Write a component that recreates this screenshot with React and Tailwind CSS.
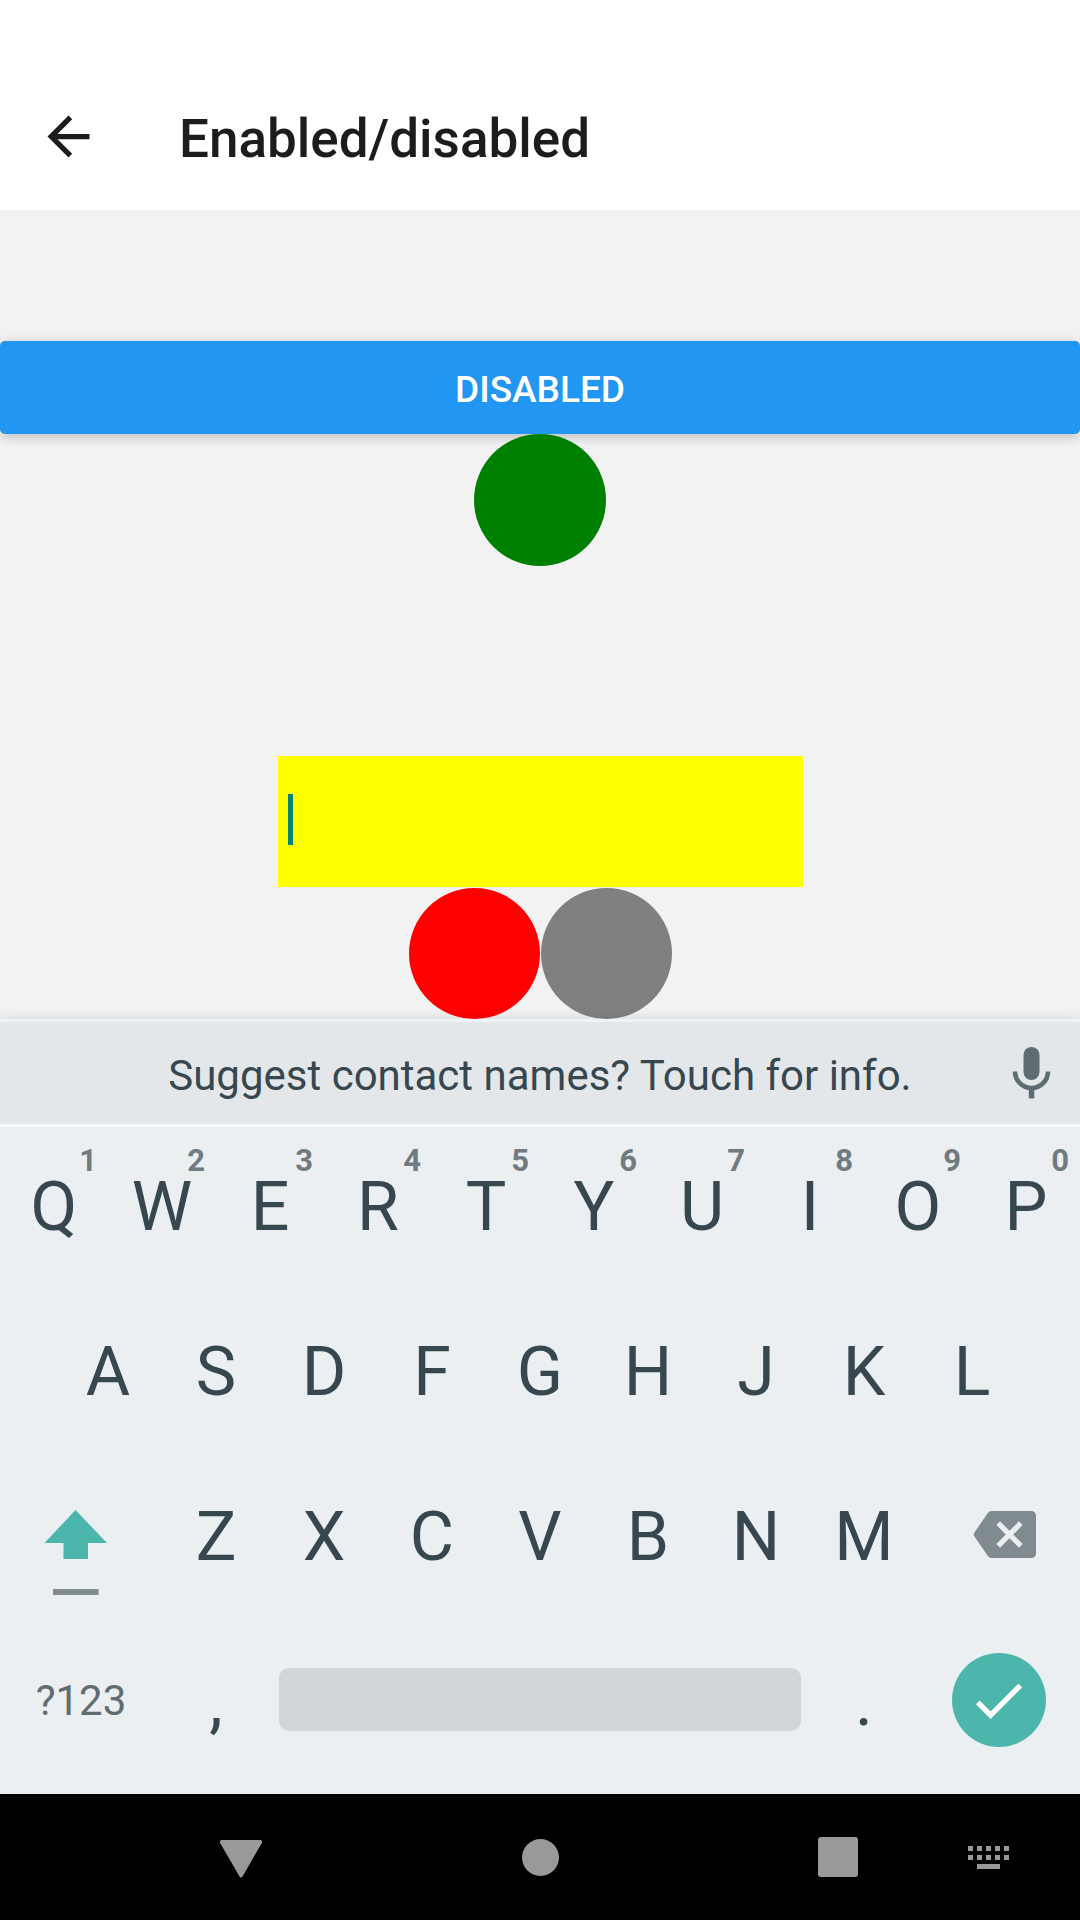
const topRow = [
  ["Q", "1"],
  ["W", "2"],
  ["E", "3"],
  ["R", "4"],
  ["T", "5"],
  ["Y", "6"],
  ["U", "7"],
  ["I", "8"],
  ["O", "9"],
  ["P", "0"],
];
const middleRow = ["A", "S", "D", "F", "G", "H", "J", "K", "L"];
const bottomRow = ["Z", "X", "C", "V", "B", "N", "M"];

function Key({ label, hint }) {
  return (
    <button
      type="button"
      className="relative col-span-2 flex items-center justify-center pb-[20px] text-[68px] leading-none text-[#37474f]"
    >
      {label}
      {hint && (
        <span className="absolute top-[13px] right-[11px] text-[31px] leading-7 font-bold text-[#6f7b80]">
          {hint}
        </span>
      )}
    </button>
  );
}

function KeyRow({ children }) {
  return <div className="grid h-[165px] grid-cols-20">{children}</div>;
}

function Header() {
  return (
    <header className="flex h-[210px] items-center bg-white pt-[63px] pl-[37px]">
      <button type="button" aria-label="Back">
        <svg width="63" height="63" viewBox="0 0 24 24" fill="#1c1c1e">
          <path d="M20 11H7.83l5.59-5.59L12 4l-8 8 8 8 1.41-1.41L7.83 13H20v-2z" />
        </svg>
      </button>
      <h1 className="pt-[4px] pl-[79px] text-[53px] leading-[62px] font-medium text-[#1c1c1e]">
        Enabled/disabled
      </h1>
    </header>
  );
}

function Content() {
  return (
    <main className="flex flex-1 flex-col items-center bg-[#f2f2f2] pt-[131px]">
      <button
        type="button"
        className="h-[93px] w-full rounded-[5px] bg-[#2196f3] pt-[3px] text-[37px] leading-none font-medium text-white shadow-[0_3px_12px_rgba(0,0,0,0.22)]"
      >
        DISABLED
      </button>
      <div className="relative size-[132px] rounded-full bg-[#008000]" />
      <div className="mt-[190px] flex flex-col items-center gap-px pl-px">
        <div className="relative">
          <input
            type="text"
            aria-label="Text input"
            className="block h-[131px] w-[525px] bg-[#ffff00] px-[10px] text-[37px] caret-transparent outline-none"
          />
          <span className="absolute top-[38px] left-[10px] h-[51px] w-[5px] bg-[#008577]" />
        </div>
        <div className="flex gap-px">
          <div className="size-[131px] rounded-full bg-[#ff0000]" />
          <div className="size-[131px] rounded-full bg-[#808080]" />
        </div>
      </div>
    </main>
  );
}

function SuggestionBar() {
  return (
    <div className="relative flex h-[108px] items-center justify-center border-y-[3px] border-t-[#eff2f4] border-b-[#f6f8f9] bg-[#e3e7e9]">
      <p className="pt-[5px] text-[42px] leading-[50px] text-[#37474f]">
        Suggest contact names? Touch for info.
      </p>
      <button type="button" aria-label="Voice input" className="absolute top-[20px] right-[16px]">
        <svg width="64" height="64" viewBox="0 0 64 64">
          <rect x="23.500" y="5" width="16" height="33" rx="8" fill="#5f6c72" />
          <path d="M15 29.500a16.500 16.500 0 0 0 33 0" fill="none" stroke="#5f6c72" strokeWidth="4.600" />
          <path d="M28.800 46h5.500v10.500H28.800z" fill="#5f6c72" />
        </svg>
      </button>
    </div>
  );
}

function Keyboard() {
  return (
    <section aria-label="Keyboard" className="relative bg-[#ebeff2] shadow-[0_0_12px_rgba(0,0,0,0.12)]">
      <SuggestionBar />
      <div className="pt-[7px]">
        <KeyRow>
          {topRow.map(([label, hint]) => (
            <Key key={label} label={label} hint={hint} />
          ))}
        </KeyRow>
        <KeyRow>
          <span />
          {middleRow.map((label) => (
            <Key key={label} label={label} />
          ))}
        </KeyRow>
        <KeyRow>
          <button type="button" aria-label="Shift" className="col-span-3 flex justify-center pt-[46px] pr-[10px]">
            <svg width="64" height="87" viewBox="0 0 64 87">
              <path d="M31.500 0L63 33H44V49H19.500V33H.500z" fill="#4db6ac" />
              <path d="M9 79h45.500v6H9z" fill="#808b8f" />
            </svg>
          </button>
          {bottomRow.map((label) => (
            <Key key={label} label={label} />
          ))}
          <button type="button" aria-label="Delete" className="col-span-3 flex justify-center pt-[47px] pl-[12px]">
            <svg width="64" height="48" viewBox="0 0 64 48">
              <path
                d="M18.500 0H58.500a4.500 4.500 0 0 1 4.500 4.500V42.500a4.500 4.500 0 0 1-4.500 4.500H18.500a4.500 4.500 0 0 1-3.700-2L1.300 25.200a3 3 0 0 1 0-3.400L14.800 2a4.500 4.500 0 0 1 3.700-2z"
                fill="#808b8f"
              />
              <path d="M25.200 12.200l22.600 22.600M47.800 12.200L25.200 34.800" stroke="#ebeff2" strokeWidth="5.200" />
            </svg>
          </button>
        </KeyRow>
        <KeyRow>
          <button
            type="button"
            className="col-span-3 flex items-center justify-center pb-[22px] text-[42px] leading-none text-[#5f6c70]"
          >
            ?123
          </button>
          <Key label="," />
          <div className="col-span-10 flex px-[9px] pt-[39px]">
            <button type="button" aria-label="Space" className="h-[63px] flex-1 rounded-[10px] bg-[#d1d6d9]" />
          </div>
          <Key label="." />
          <div className="col-span-3 flex justify-center pt-[24px]">
            <button
              type="button"
              aria-label="Done"
              className="mr-px flex size-[94px] items-center justify-center rounded-full bg-[#4db6ac]"
            >
              <svg width="63" height="63" viewBox="0 0 24 24" fill="#ffffff">
                <path d="M9 16.170L4.830 12l-1.420 1.410L9 19 21 7l-1.410-1.410z" />
              </svg>
            </button>
          </div>
        </KeyRow>
      </div>
    </section>
  );
}

function NavigationBar() {
  return (
    <nav className="relative grid h-[126px] grid-cols-[141fr_200fr_99fr_200fr_124fr_148fr_153fr_15fr] bg-black">
      <button type="button" aria-label="Back" className="col-start-2 flex items-center justify-center pt-[4px]">
        <svg width="42" height="38" viewBox="0 0 42 38">
          <path d="M2 0H40a2 2 0 0 1 1.700 3.200L22.500 36.500a1.700 1.700 0 0 1-3 0L.3 3.200A2 2 0 0 1 2 0z" fill="#999999" />
        </svg>
      </button>
      <button type="button" aria-label="Home" className="col-start-4 flex items-center justify-center">
        <span className="size-[37px] rounded-full bg-[#999999]" />
      </button>
      <button type="button" aria-label="Recent apps" className="col-start-6 flex items-center justify-center">
        <span className="size-10 rounded-[3px] bg-[#999999]" />
      </button>
      <button type="button" aria-label="Switch keyboard" className="col-start-7 flex items-center justify-center">
        <svg width="41" height="23" viewBox="0 0 41 23" fill="#999999">
          {[0, 9, 18, 27, 36].map((x) => (
            <g key={x}>
              <rect x={x} y="0" width="5" height="5" />
              <rect x={x} y="9" width="5" height="5" />
            </g>
          ))}
          <rect x="9" y="18" width="23" height="5" />
        </svg>
      </button>
    </nav>
  );
}

export default function App() {
  return (
    <div className="flex min-h-screen flex-col font-[Roboto,sans-serif]">
      <Header />
      <Content />
      <Keyboard />
      <NavigationBar />
    </div>
  );
}
